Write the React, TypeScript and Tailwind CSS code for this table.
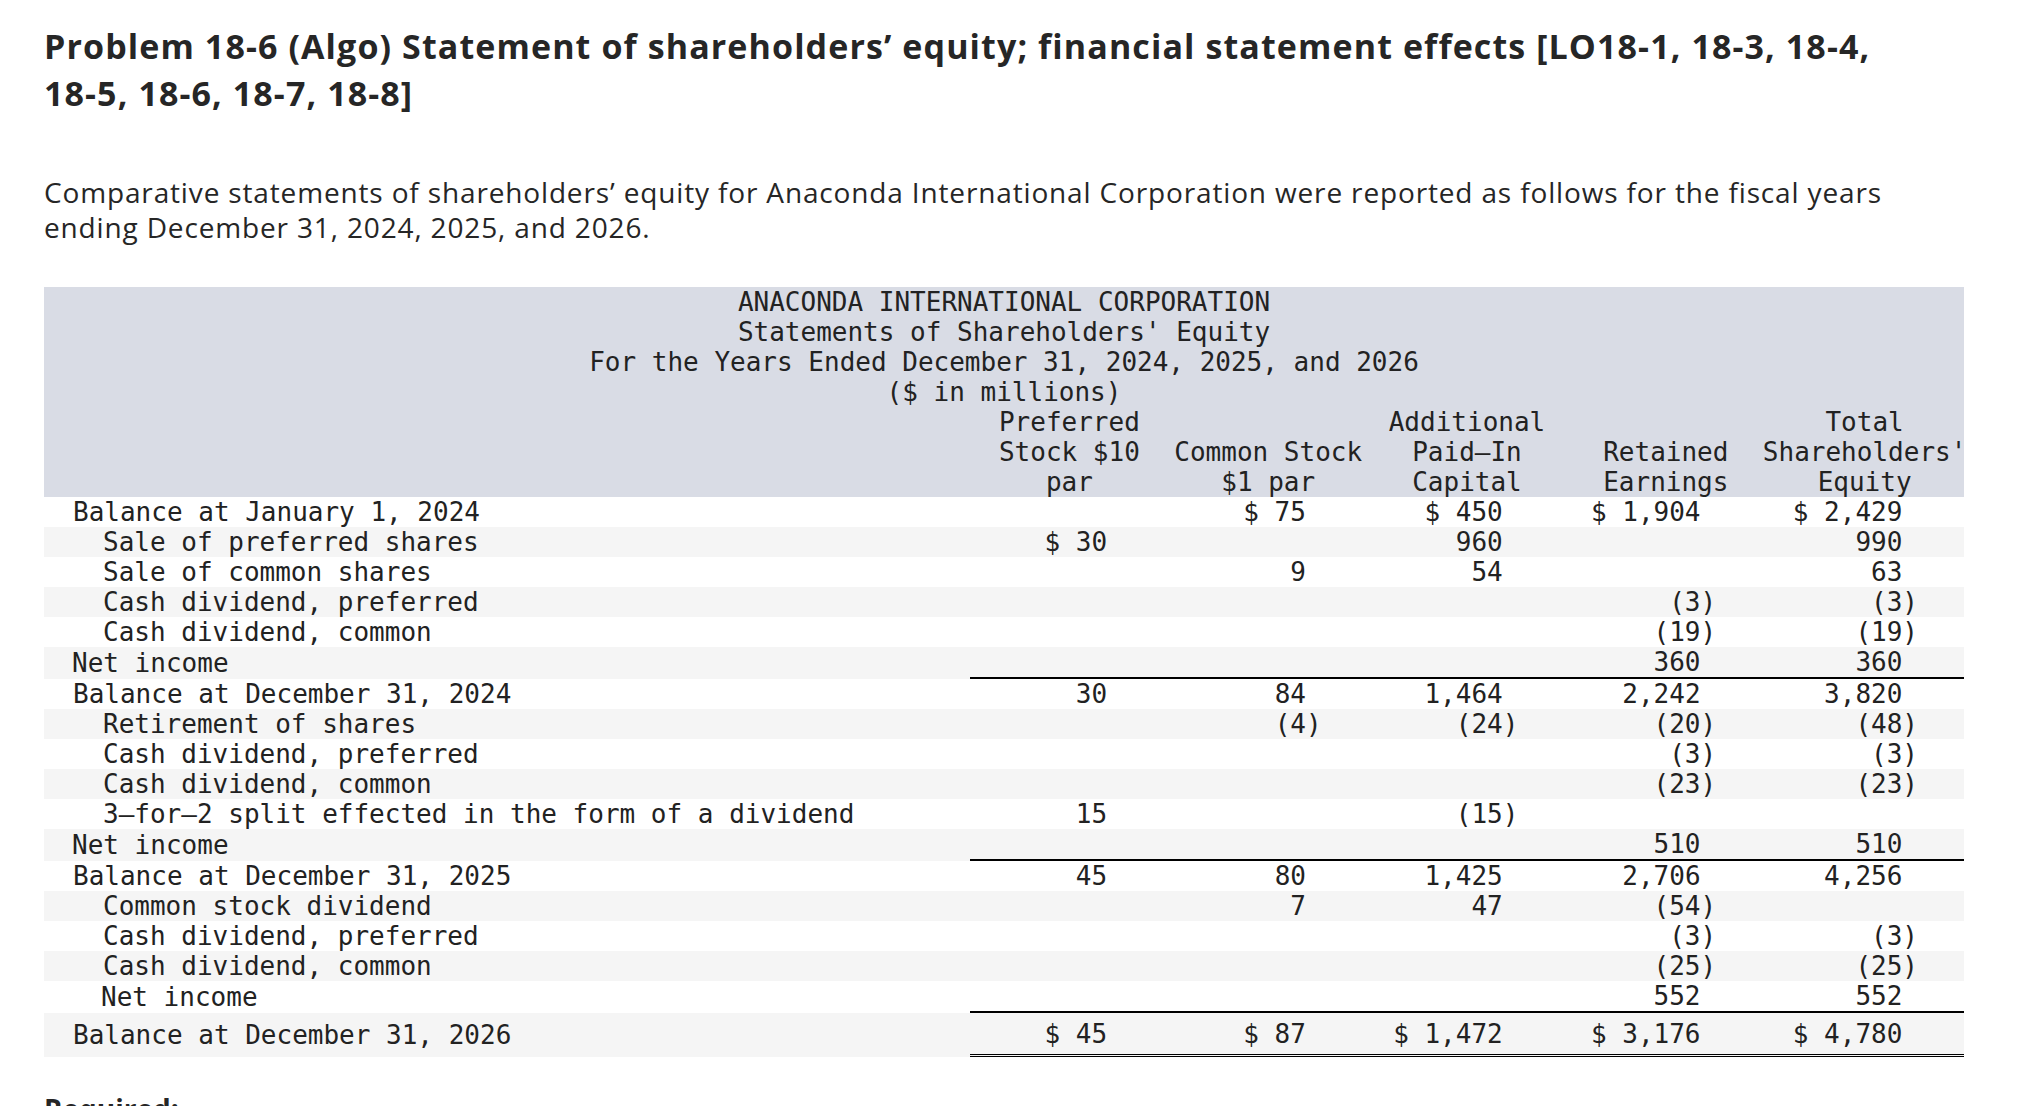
import React from "react";

type Row = {
  label: string;
  indent: number;
  vals: string[];
  rule?: boolean;
  final?: boolean;
};

const rows: Row[] = [
  { label: "Balance at January 1, 2024", indent: 29, vals: ["", "$ 75", "$ 450", "$ 1,904", "$ 2,429"] },
  { label: "Sale of preferred shares", indent: 59, vals: ["$ 30", "", "960", "", "990"] },
  { label: "Sale of common shares", indent: 59, vals: ["", "9", "54", "", "63"] },
  { label: "Cash dividend, preferred", indent: 59, vals: ["", "", "", "(3)", "(3)"] },
  { label: "Cash dividend, common", indent: 59, vals: ["", "", "", "(19)", "(19)"] },
  { label: "Net income", indent: 28, vals: ["", "", "", "360", "360"], rule: true },
  { label: "Balance at December 31, 2024", indent: 29, vals: ["30", "84", "1,464", "2,242", "3,820"] },
  { label: "Retirement of shares", indent: 59, vals: ["", "(4)", "(24)", "(20)", "(48)"] },
  { label: "Cash dividend, preferred", indent: 59, vals: ["", "", "", "(3)", "(3)"] },
  { label: "Cash dividend, common", indent: 59, vals: ["", "", "", "(23)", "(23)"] },
  { label: "3–for–2 split effected in the form of a dividend", indent: 59, vals: ["15", "", "(15)", "", ""] },
  { label: "Net income", indent: 28, vals: ["", "", "", "510", "510"], rule: true },
  { label: "Balance at December 31, 2025", indent: 29, vals: ["45", "80", "1,425", "2,706", "4,256"] },
  { label: "Common stock dividend", indent: 59, vals: ["", "7", "47", "(54)", ""] },
  { label: "Cash dividend, preferred", indent: 59, vals: ["", "", "", "(3)", "(3)"] },
  { label: "Cash dividend, common", indent: 59, vals: ["", "", "", "(25)", "(25)"] },
  { label: "Net income", indent: 57, vals: ["", "", "", "552", "552"], rule: true },
  { label: "Balance at December 31, 2026", indent: 29, vals: ["$ 45", "$ 87", "$ 1,472", "$ 3,176", "$ 4,780"], final: true },
];

const colHeads: string[][] = [
  ["Preferred", "Stock $10", "par"],
  ["Common Stock", "$1 par"],
  ["Additional", "Paid–In", "Capital"],
  ["Retained", "Earnings"],
  ["Total", "Shareholders'", "Equity"],
];

const padR = ["pr-[46px]", "pr-[46px]", "pr-[48px]", "pr-[49px]", "pr-[46px]"];

function fmt(v: string) {
  if (!v) return "";
  if (v.endsWith(")")) return v;
  return v + "\u00a0";
}

export default function App() {
  return (
    <div className="min-h-screen bg-white px-[44px] pt-[23px] text-[#262626]">
      <h1 className="whitespace-nowrap font-['Open_Sans',sans-serif] text-[34px] font-bold leading-[47px] tracking-[1.1px]">
        Problem 18-6 (Algo) Statement of shareholders’ equity; financial statement effects [LO18-1, 18-3, 18-4,
        <br />
        18-5, 18-6, 18-7, 18-8]
      </h1>
      <p className="mt-[58px] whitespace-nowrap font-['Open_Sans',sans-serif] text-[28px] leading-[35px] tracking-[0.85px]">
        Comparative statements of shareholders’ equity for Anaconda International Corporation were reported as follows for the fiscal years
        <br />
        ending December 31, 2024, 2025, and 2026.
      </p>

      <div className="mt-[42px] w-[1920px] font-['DejaVu_Sans_Mono',monospace] text-[26px] leading-[30px] text-[#222]">
        <div className="bg-[#d9dce5]">
          <div className="flex flex-col items-center whitespace-pre">
            <div>ANACONDA INTERNATIONAL CORPORATION</div>
            <div>Statements of Shareholders' Equity</div>
            <div>For the Years Ended December 31, 2024, 2025, and 2026</div>
            <div>($ in millions)</div>
          </div>
          <div className="grid grid-cols-[926px_repeat(5,minmax(0,1fr))]">
            <div className="h-[90px]" />
            {colHeads.map((lines, i) => (
              <div key={i} className="flex h-[90px] flex-col items-center justify-end whitespace-pre">
                {lines.map((l, j) => (
                  <div key={j}>{l}</div>
                ))}
              </div>
            ))}
          </div>
        </div>

        {rows.map((r, i) => {
          const bg = i % 2 === 1 ? "bg-[#f5f5f5]" : "bg-white";
          return (
            <div key={i} className={`grid grid-cols-[926px_repeat(5,minmax(0,1fr))] ${bg}`}>
              <div
                className={`flex items-center whitespace-pre ${r.final ? "h-[44px]" : ""}`}
                style={{ paddingLeft: r.indent }}
              >
                {r.label}
              </div>
              {r.vals.map((v, j) => (
                <div
                  key={j}
                  className={`flex items-center justify-end whitespace-pre ${padR[j]} ${
                    r.rule ? "border-b-2 border-black" : ""
                  } ${r.final ? "border-b-[3px] border-double border-black" : ""}`}
                >
                  {fmt(v)}
                </div>
              ))}
            </div>
          );
        })}
      </div>

      <h2 className="mt-[35px] font-['Open_Sans',sans-serif] text-[28px] font-bold leading-[35px]">Required:</h2>
    </div>
  );
}
